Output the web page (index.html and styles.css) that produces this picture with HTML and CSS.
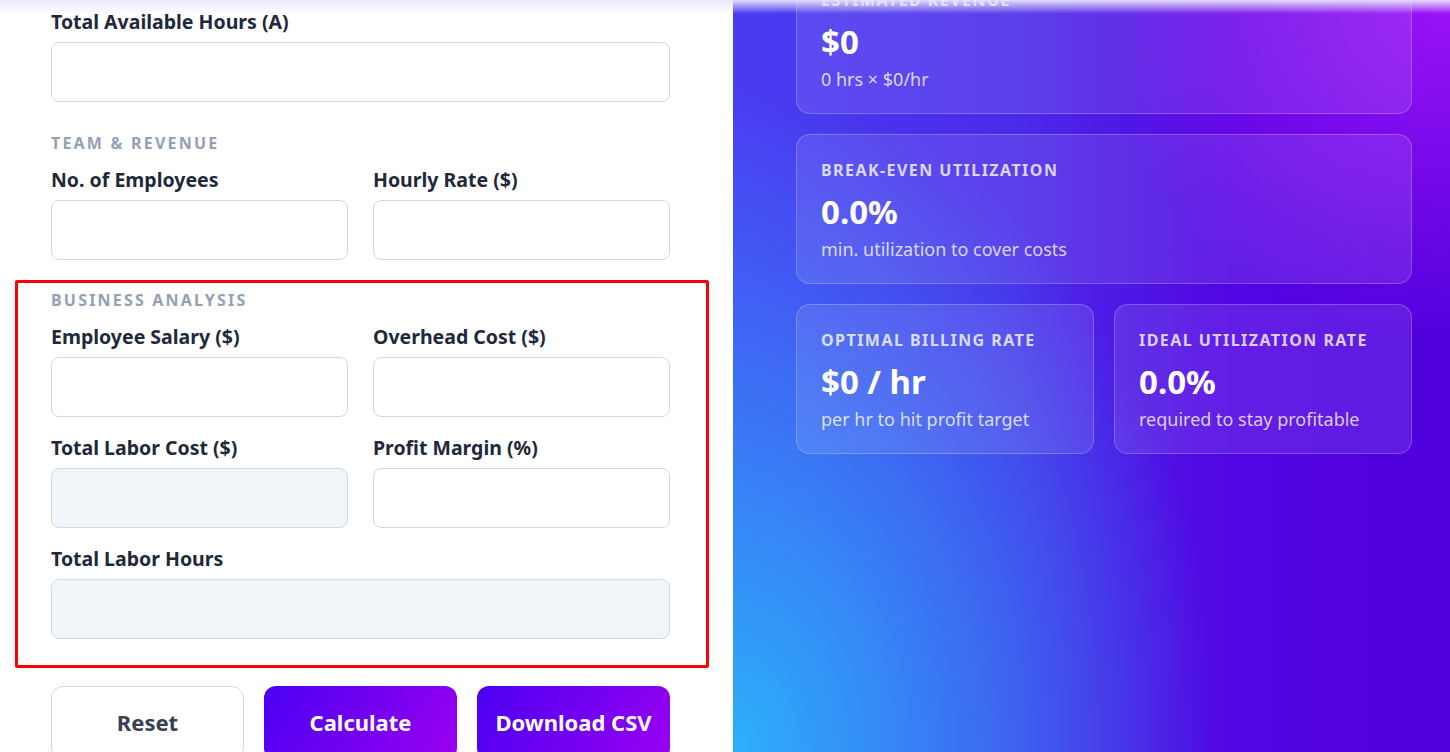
FILE: index.html
```html
<!DOCTYPE html>
<html lang="en">
<head>
  <meta charset="UTF-8" />
  <meta name="viewport" content="width=device-width, initial-scale=1" />
  <title>Utilization Calculator</title>
  <link rel="stylesheet" href="styles.css">
</head>
<body>
  <div class="top-fade"></div>

  <main class="form-panel">
    <div class="field">
      <label for="availHours">Total Available Hours (A)</label>
      <input type="text" id="availHours" />
    </div>

    <h3 class="section-title title-team">Team &amp; Revenue</h3>
    <div class="field-grid">
      <div class="field">
        <label for="employees">No. of Employees</label>
        <input type="text" id="employees" />
      </div>
      <div class="field">
        <label for="rate">Hourly Rate ($)</label>
        <input type="text" id="rate" />
      </div>
    </div>

    <section class="analysis-box">
      <h3 class="section-title">Business Analysis</h3>
      <div class="field-grid">
        <div class="field">
          <label for="salary">Employee Salary ($)</label>
          <input type="text" id="salary" />
        </div>
        <div class="field">
          <label for="overhead">Overhead Cost ($)</label>
          <input type="text" id="overhead" />
        </div>
        <div class="field">
          <label for="laborCost">Total Labor Cost ($)</label>
          <input type="text" id="laborCost" disabled />
        </div>
        <div class="field">
          <label for="margin">Profit Margin (%)</label>
          <input type="text" id="margin" />
        </div>
        <div class="field wide">
          <label for="laborHours">Total Labor Hours</label>
          <input type="text" id="laborHours" disabled />
        </div>
      </div>
    </section>

    <div class="actions">
      <button class="btn btn-outline">Reset</button>
      <button class="btn btn-primary">Calculate</button>
      <button class="btn btn-primary">Download CSV</button>
    </div>
  </main>

  <aside class="results-panel">
    <div class="cards">
      <div class="card wide">
        <div class="card-label">Estimated Revenue</div>
        <div class="card-value">$0</div>
        <div class="card-sub">0 hrs × $0/hr</div>
      </div>
      <div class="card wide">
        <div class="card-label">Break-even Utilization</div>
        <div class="card-value">0.0%</div>
        <div class="card-sub">min. utilization to cover costs</div>
      </div>
      <div class="card">
        <div class="card-label">Optimal Billing Rate</div>
        <div class="card-value">$0 / hr</div>
        <div class="card-sub">per hr to hit profit target</div>
      </div>
      <div class="card">
        <div class="card-label">Ideal Utilization Rate</div>
        <div class="card-value">0.0%</div>
        <div class="card-sub">required to stay profitable</div>
      </div>
    </div>
  </aside>
</body>
</html>
```

FILE: styles.css
```css
:root {
  --text: #1e293b;
  --muted: #94a0b4;
  --border: #d3d9e2;
  --disabled: #f1f4f8;
  --accent-from: #4a00f2;
  --accent-to: #9b00f0;
}

*, *::before, *::after { box-sizing: border-box; }

body {
  margin: 0;
  height: 752px;
  overflow: hidden;
  display: flex;
  font-family: 'Noto Sans', 'Lato', sans-serif;
  color: var(--text);
  background: #fff;
}

.top-fade {
  position: fixed;
  top: 0;
  left: 0;
  right: 0;
  height: 14px;
  background: linear-gradient(to bottom, rgba(234, 230, 252, 0.95), rgba(255, 255, 255, 0));
  z-index: 10;
}

/* left form */
.form-panel {
  width: 733px;
  flex-shrink: 0;
  padding: 10px 63px 0 51px;
}

.field label {
  display: block;
  font-size: 19.5px;
  font-weight: 700;
  line-height: 24px;
  margin-bottom: 8px;
  color: var(--text);
}

.field input {
  display: block;
  width: 100%;
  height: 60px;
  border: 1.5px solid var(--border);
  border-radius: 8px;
  background: #fff;
  font: inherit;
  padding: 0 16px;
}

.field input:disabled {
  background: var(--disabled);
}

.section-title {
  margin: 31px 0 15px;
  font-size: 16px;
  line-height: 20px;
  font-weight: 700;
  letter-spacing: 2.2px;
  text-transform: uppercase;
  color: var(--muted);
}

.field-grid {
  display: grid;
  grid-template-columns: 1fr 1fr;
  column-gap: 25px;
  row-gap: 19px;
}

.field.wide {
  grid-column: span 2;
}

.analysis-box {
  margin: 20px -39px 0 -36px;
  padding: 7px 36px 26px 33px;
  border: 3px solid #f00;
  border-radius: 2px;
}

.analysis-box .section-title {
  margin-top: 0;
}

.actions {
  display: grid;
  grid-template-columns: repeat(3, 1fr);
  gap: 20px;
  margin-top: 18px;
}

.btn {
  height: 74px;
  border-radius: 12px;
  font-family: inherit;
  font-size: 22px;
  font-weight: 700;
  cursor: pointer;
  padding-bottom: 4px;
}

.btn-outline {
  background: #fff;
  border: 1.5px solid var(--border);
  color: #374151;
}

.btn-primary {
  border: none;
  color: #fff;
  background: linear-gradient(120deg, var(--accent-from), var(--accent-to));
}

/* right results */
.results-panel {
  flex: 1;
  padding: 0 38px 0 63px;
  background:
    radial-gradient(ellipse 85% 110% at 0% 100%, rgba(42, 182, 250, 0.95), rgba(42, 182, 250, 0) 80%),
    radial-gradient(ellipse 65% 60% at 100% 0%, rgba(165, 20, 250, 0.9), rgba(165, 20, 250, 0) 75%),
    linear-gradient(to right, #4a3cf2 0%, #4a2ae8 40%, #5204e2 70%, #5000dc 100%);
}

.cards {
  display: grid;
  grid-template-columns: 1fr 1fr;
  gap: 20px;
  margin-top: -36px;
}

.card {
  height: 150px;
  padding: 25px 24px;
  border-radius: 14px;
  background: rgba(255, 255, 255, 0.1);
  border: 1px solid rgba(255, 255, 255, 0.22);
  color: #fff;
}

.card.wide {
  grid-column: span 2;
}

.card-label {
  font-size: 16px;
  line-height: 20px;
  font-weight: 700;
  letter-spacing: 1.45px;
  text-transform: uppercase;
  color: rgba(255, 255, 255, 0.8);
}

.card-value {
  margin-top: 12px;
  font-size: 33px;
  line-height: 40px;
  font-weight: 700;
}

.card-sub {
  margin-top: 5px;
  font-size: 18px;
  line-height: 24px;
  color: rgba(255, 255, 255, 0.78);
}
```
